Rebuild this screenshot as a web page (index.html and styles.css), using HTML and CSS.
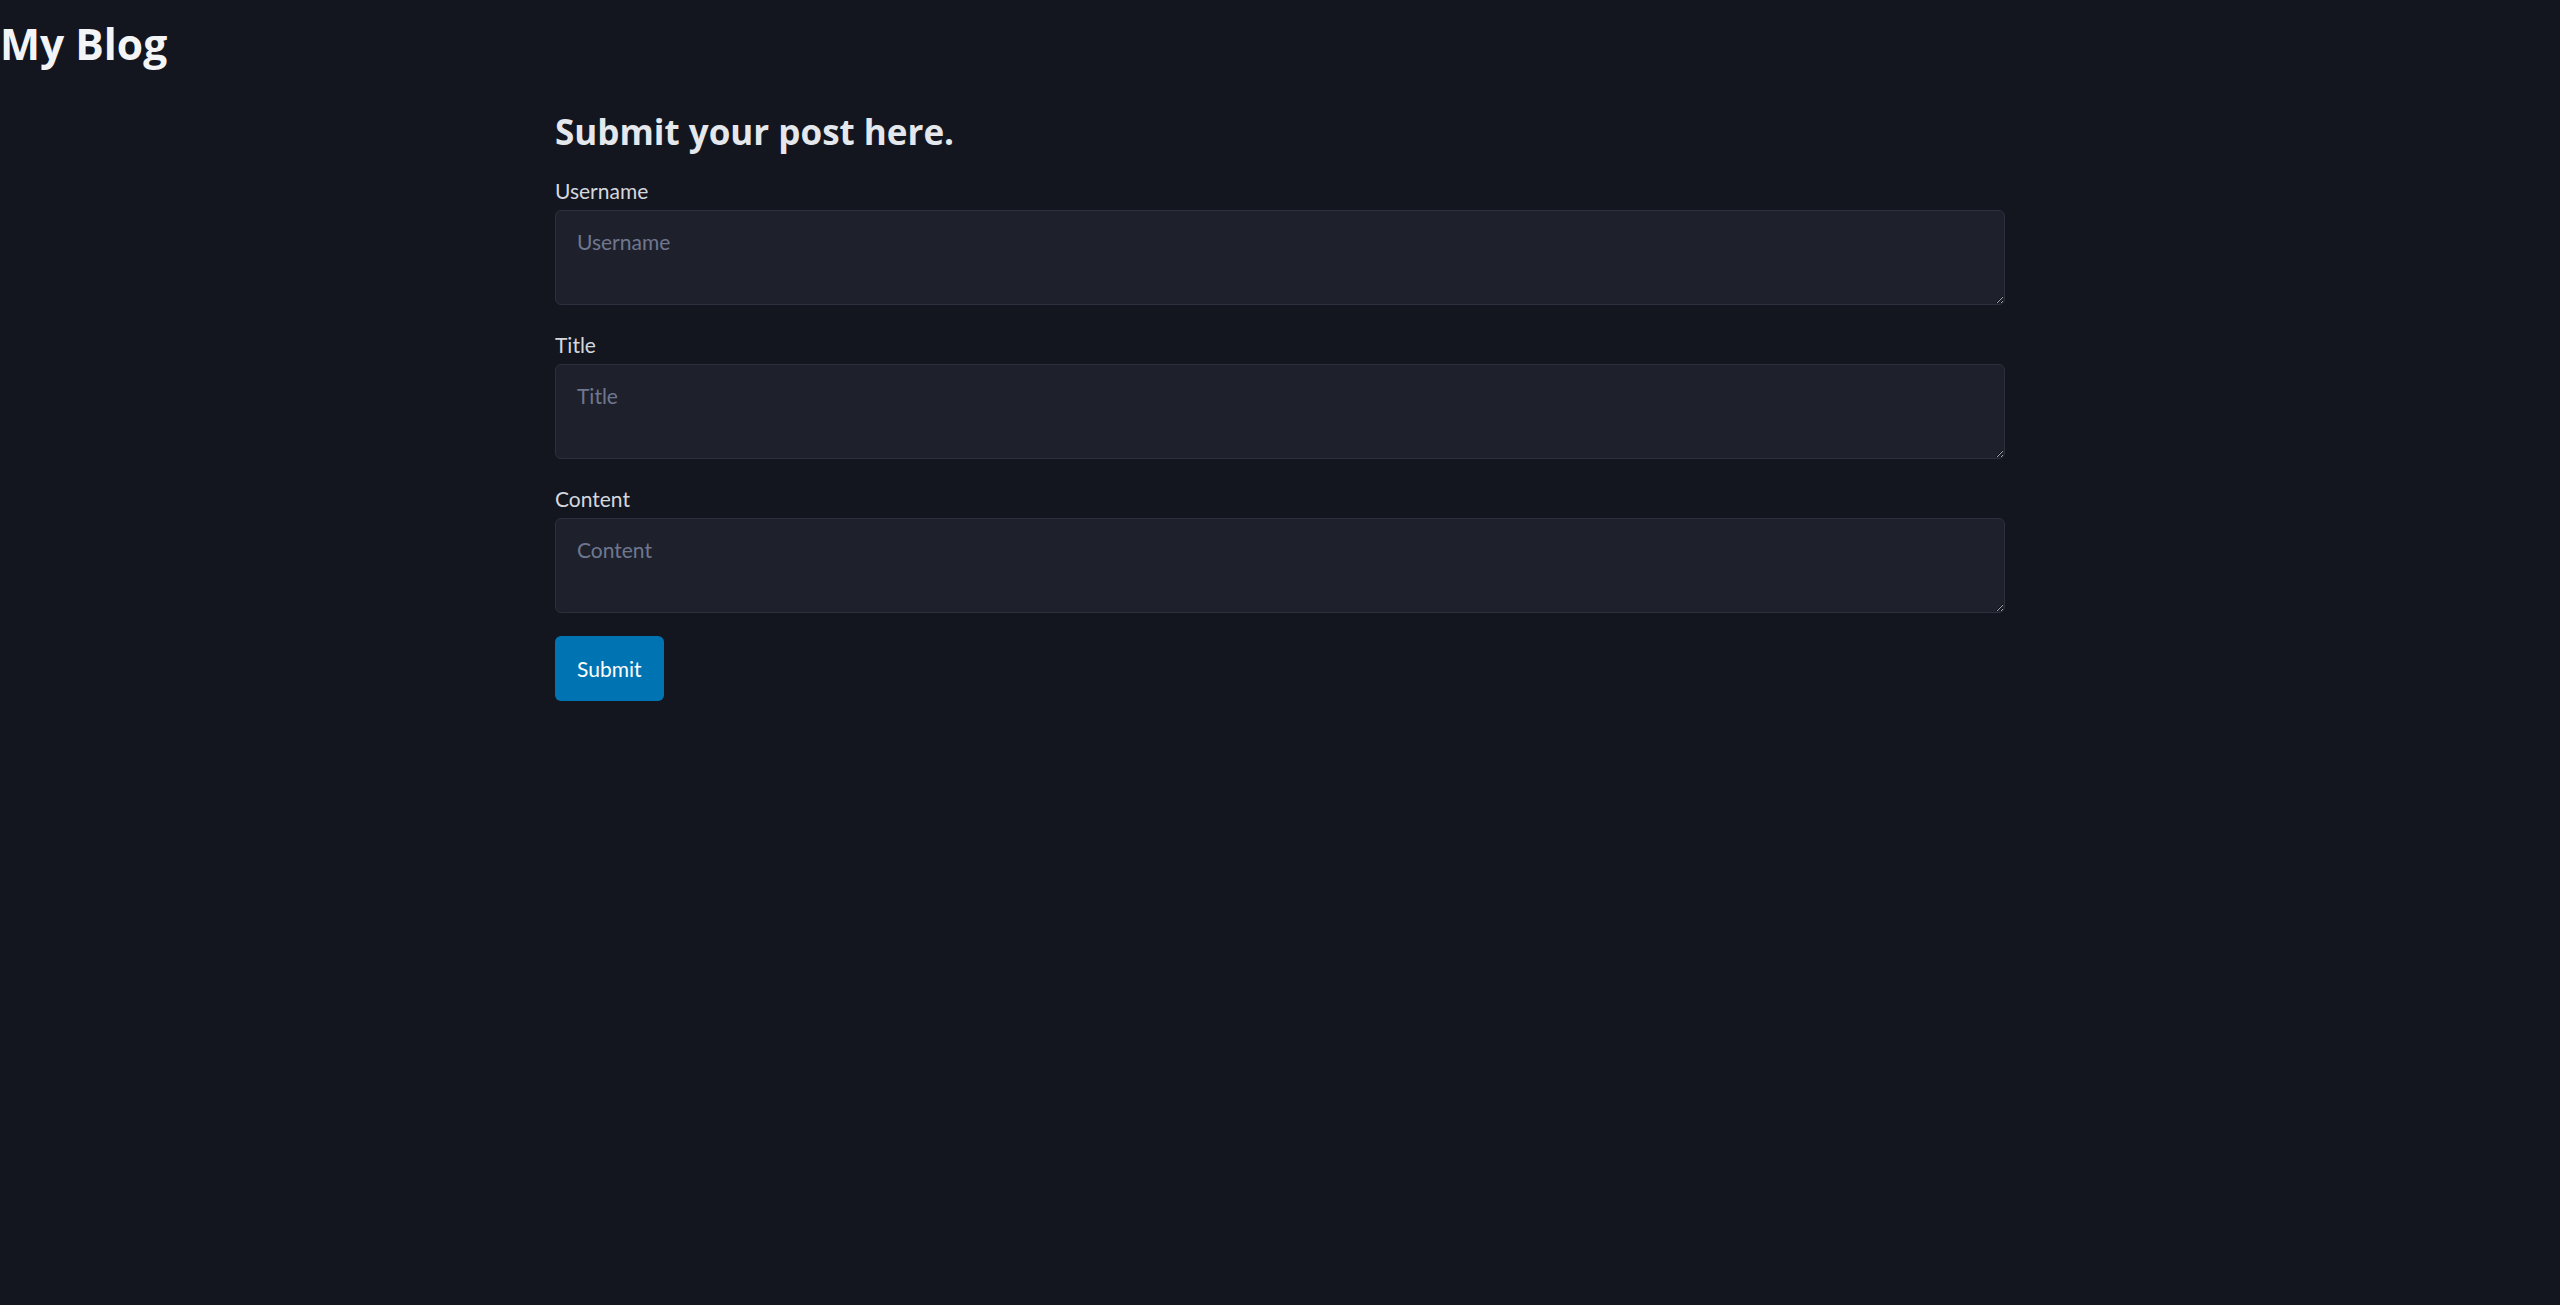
FILE: index.html
```html
<!DOCTYPE html>
<html lang="en">
<head>
<meta charset="utf-8">
<title>My Blog</title>
<link rel="stylesheet" href="styles.css">
</head>
<body>
<header class="site-header">
  <h1 class="site-title">My Blog</h1>
</header>
<main class="container">
  <h2 class="page-title">Submit your post here.</h2>
  <form class="post-form">
    <div class="field">
      <label class="field-label" for="username">Username</label>
      <textarea class="field-input" id="username" placeholder="Username"></textarea>
    </div>
    <div class="field">
      <label class="field-label" for="title">Title</label>
      <textarea class="field-input" id="title" placeholder="Title"></textarea>
    </div>
    <div class="field">
      <label class="field-label" for="content">Content</label>
      <textarea class="field-input" id="content" placeholder="Content"></textarea>
    </div>
    <div class="actions">
      <button class="submit-btn" type="submit">Submit</button>
    </div>
  </form>
</main>
</body>
</html>
```
FILE: styles.css
```css
html, body {
  margin: 0;
  padding: 0;
}

body {
  background: #13161f;
  color: #d4d7de;
  font-family: Lato, "Noto Sans", sans-serif;
  min-height: 100vh;
}

.site-header {
  padding-top: 19px;
}

.site-title {
  margin: 0;
  font-family: "Open Sans", "Noto Sans", sans-serif;
  font-size: 42.5px;
  line-height: 50px;
  font-weight: 700;
  color: #f3f4f6;
}

.container {
  max-width: 1450px;
  margin: 0 auto;
}

.page-title {
  margin: 43px 0 0;
  font-family: "Open Sans", "Noto Sans", sans-serif;
  font-size: 35px;
  line-height: 40px;
  font-weight: 700;
  color: #e4e7ec;
}

.post-form {
  display: flex;
  flex-direction: column;
  gap: 23px;
  margin-top: 21.5px;
}

.field {
  display: flex;
  flex-direction: column;
}

.field-label {
  font-size: 21px;
  line-height: 34px;
  margin-bottom: 2px;
  color: #d4d7de;
}

.field-input {
  display: block;
  box-sizing: border-box;
  width: 100%;
  height: 95px;
  margin: 0;
  padding: 14px 21px;
  border: 1px solid #2c303c;
  border-radius: 6px;
  background: #1e212b;
  color: #d4d7de;
  font-family: Lato, "Noto Sans", sans-serif;
  font-size: 21px;
  line-height: 34px;
  color-scheme: dark;
  outline: none;
}

.field-input::placeholder {
  color: #6f7790;
  opacity: 1;
}

.actions {
  display: flex;
}

.submit-btn {
  height: 65px;
  padding: 0 22px;
  border: none;
  border-radius: 6px;
  background: #0074b2;
  color: #ffffff;
  font-family: Lato, "Noto Sans", sans-serif;
  font-size: 21px;
  line-height: 65px;
  cursor: pointer;
}
```
